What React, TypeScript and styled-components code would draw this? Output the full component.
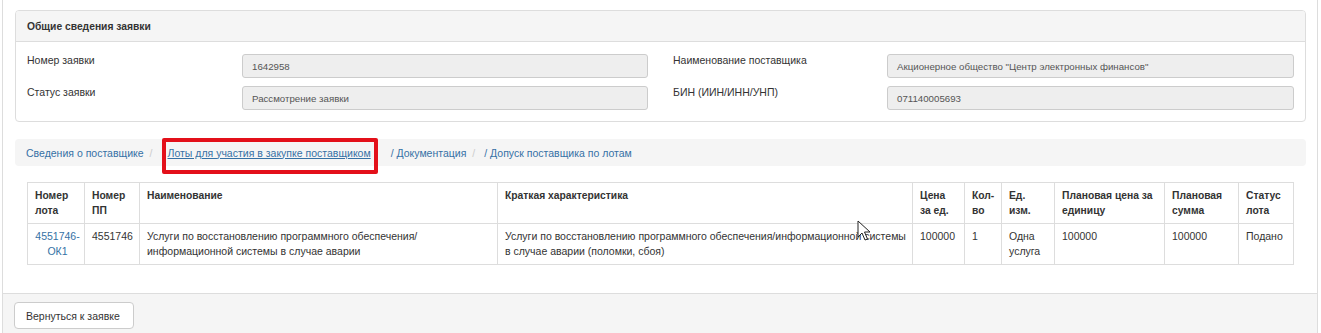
import React from "react";
import styled, { createGlobalStyle } from "styled-components";

const Global = createGlobalStyle`
  html, body { margin: 0; padding: 0; background: #fff; }
  body { font-family: "Liberation Sans", Arial, sans-serif; font-size: 10.5px; color: #333; }
  * { box-sizing: border-box; }
`;

const Page = styled.div`
  position: relative;
  margin-left: 2px;
  width: 1316px;
  border-left: 1px solid #ddd;
  border-right: 1px solid #ddd;
  background: #fff;
`;

const Content = styled.div`
  padding: 10px 11px 28px 12px;
`;

const Panel = styled.div`
  border: 1px solid #ddd;
  border-radius: 4px;
  background: #fff;
`;

const PanelHeading = styled.div`
  height: 31px;
  display: flex;
  align-items: center;
  padding: 0 11px;
  background: #f5f5f5;
  border-bottom: 1px solid #ddd;
  border-radius: 3px 3px 0 0;
  font-weight: bold;
  font-size: 10.3px;
  color: #333;
`;

const PanelBody = styled.div`
  padding: 12px 11px 11px 11px;
  display: grid;
  grid-template-columns: 1fr 1fr;
  column-gap: 25px;
`;

const FieldCol = styled.div`
  display: flex;
  flex-direction: column;
  gap: 8px;
`;

const Field = styled.div<{ $label: number }>`
  display: grid;
  grid-template-columns: ${(p) => p.$label}px 1fr;
  align-items: start;
`;

const Label = styled.div`
  font-size: 10.5px;
  line-height: 13px;
  color: #333;
`;

const Input = styled.div`
  height: 24px;
  display: flex;
  align-items: center;
  padding: 0 9px;
  background: #eee;
  border: 1px solid #ccc;
  border-radius: 3px;
  font-size: 9.7px;
  color: #555;
  white-space: nowrap;
`;

const Breadcrumb = styled.nav`
  position: relative;
  margin-top: 17px;
  height: 27px;
  display: flex;
  align-items: center;
  padding: 0 11px;
  background: #f5f5f5;
  border-radius: 4px;
`;

const Crumb = styled.a<{ $underline?: boolean; $gap?: number }>`
  color: #3571a5;
  font-size: 10.5px;
  text-decoration: ${(p) => (p.$underline ? "underline" : "none")};
  margin-left: ${(p) => p.$gap ?? 0}px;
  white-space: nowrap;
`;

const Sep = styled.span<{ $l: number; $r: number }>`
  color: #ccc;
  margin: 0 ${(p) => p.$r}px 0 ${(p) => p.$l}px;
`;

const Highlight = styled.div`
  position: absolute;
  left: 147px;
  top: -1px;
  width: 216px;
  height: 36px;
  border: 4px solid #e3101a;
  border-radius: 2px;
  pointer-events: none;
`;

const Table = styled.table`
  margin: 16px 0 0 12px;
  width: 1267px;
  border-collapse: collapse;
  table-layout: fixed;
  font-size: 10.5px;
  color: #333;
`;

const Th = styled.th`
  border: 1px solid #ddd;
  padding: 5px 7px;
  line-height: 15px;
  text-align: left;
  vertical-align: top;
  font-weight: bold;
  font-size: 10.3px;
`;

const Td = styled.td<{ $center?: boolean }>`
  border: 1px solid #ddd;
  padding: 5px 4px 5px 7px;
  line-height: 15px;
  vertical-align: top;
  text-align: ${(p) => (p.$center ? "center" : "left")};
`;

const Link = styled.a`
  color: #3571a5;
  text-decoration: none;
`;

const Footer = styled.div`
  height: 41px;
  padding: 8px 11px 0 11px;
  background: #f5f5f5;
  border-top: 1px solid #ddd;
`;

const Button = styled.button`
  height: 27px;
  width: 120px;
  padding: 0 11px;
  background: #fff;
  border: 1px solid #ccc;
  border-radius: 4px;
  font-family: "Liberation Sans", Arial, sans-serif;
  font-size: 10.5px;
  color: #333;
  text-align: left;
  white-space: nowrap;
`;

const Cursor = styled.svg`
  position: absolute;
  left: 854px;
  top: 220px;
  pointer-events: none;
`;

const widths = [57, 55, 358, 415, 52, 37, 53, 110, 74, 55];

export default function App() {
  return (
    <>
      <Global />
      <Page>
        <Content>
          <Panel>
            <PanelHeading>Общие сведения заявки</PanelHeading>
            <PanelBody>
              <FieldCol>
                <Field $label={215}>
                  <Label>Номер заявки</Label>
                  <Input>1642958</Input>
                </Field>
                <Field $label={215}>
                  <Label>Статус заявки</Label>
                  <Input>Рассмотрение заявки</Input>
                </Field>
              </FieldCol>
              <FieldCol>
                <Field $label={214}>
                  <Label>Наименование поставщика</Label>
                  <Input>Акционерное общество "Центр электронных финансов"</Input>
                </Field>
                <Field $label={214}>
                  <Label>БИН (ИИН/ИНН/УНП)</Label>
                  <Input>071140005693</Input>
                </Field>
              </FieldCol>
            </PanelBody>
          </Panel>

          <Breadcrumb>
            <Crumb>Сведения о поставщике</Crumb>
            <Sep $l={6} $r={15}>/</Sep>
            <Crumb $underline>Лоты для участия в закупке поставщиком</Crumb>
            <Crumb $gap={20}>/ Документация</Crumb>
            <Sep $l={6} $r={9}>/</Sep>
            <Crumb>/ Допуск поставщика по лотам</Crumb>
            <Highlight />
          </Breadcrumb>

          <Table>
            <colgroup>
              {widths.map((w, i) => (
                <col key={i} style={{ width: w }} />
              ))}
            </colgroup>
            <thead>
              <tr>
                <Th>Номер лота</Th>
                <Th>Номер ПП</Th>
                <Th>Наименование</Th>
                <Th>Краткая характеристика</Th>
                <Th>Цена за ед.</Th>
                <Th>Кол-во</Th>
                <Th>Ед. изм.</Th>
                <Th>Плановая цена за единицу</Th>
                <Th>Плановая сумма</Th>
                <Th>Статус лота</Th>
              </tr>
            </thead>
            <tbody>
              <tr>
                <Td $center>
                  <Link>4551746-ОК1</Link>
                </Td>
                <Td>4551746</Td>
                <Td>Услуги по восстановлению программного обеспечения/ информационной системы в случае аварии</Td>
                <Td>Услуги по восстановлению программного обеспечения/информационной системы в случае аварии (поломки, сбоя)</Td>
                <Td>100000</Td>
                <Td>1</Td>
                <Td>Одна услуга</Td>
                <Td>100000</Td>
                <Td>100000</Td>
                <Td>Подано</Td>
              </tr>
            </tbody>
          </Table>
        </Content>
        <Footer>
          <Button>Вернуться к заявке</Button>
        </Footer>
        <Cursor width="14" height="22" viewBox="0 0 14 22">
          <path d="M1 1 L1 17 L5 13 L8 20 L10.5 19 L7.5 12 L13 12 Z" fill="#fff" stroke="#222" strokeWidth="1" strokeLinejoin="round" />
        </Cursor>
      </Page>
    </>
  );
}
